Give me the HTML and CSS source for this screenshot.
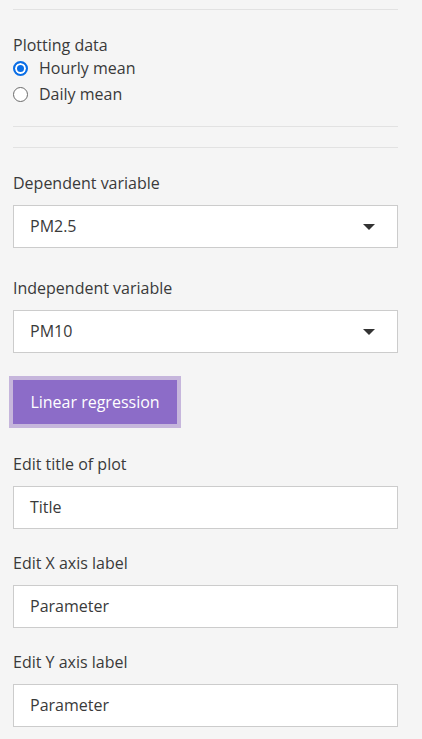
FILE: index.html
```html
<!DOCTYPE html>
<html>
<head>
<meta charset="utf-8">
<link rel="stylesheet" href="styles.css">
</head>
<body>
<div class="panel">
  <hr class="rule rule-top">
  <div class="radio-group">
    <div class="group-label">Plotting data</div>
    <label class="radio"><span class="dot checked"></span><span>Hourly mean</span></label>
    <label class="radio"><span class="dot"></span><span>Daily mean</span></label>
  </div>
  <hr class="rule rule-a">
  <hr class="rule rule-b">
  <div class="field field-select">
    <div class="label">Dependent variable</div>
    <div class="select"><span>PM2.5</span><span class="caret"></span></div>
  </div>
  <div class="field field-select2">
    <div class="label">Independent variable</div>
    <div class="select"><span>PM10</span><span class="caret"></span></div>
  </div>
  <div class="btn-wrap"><button class="btn">Linear regression</button></div>
  <div class="field field-text">
    <div class="label">Edit title of plot</div>
    <div class="input">Title</div>
  </div>
  <div class="field field-text">
    <div class="label">Edit X axis label</div>
    <div class="input">Parameter</div>
  </div>
  <div class="field field-text">
    <div class="label">Edit Y axis label</div>
    <div class="input">Parameter</div>
  </div>
</div>
</body>
</html>
```

FILE: styles.css
```css
html, body {
  margin: 0;
  padding: 0;
  background: #f5f5f5;
}
body {
  font-family: "Open Sans", "Noto Sans", sans-serif;
  font-size: 16px;
  color: #3a3a3a;
}
.panel {
  width: 385px;
  padding: 9px 0 0 13px;
}
.rule {
  border: 0;
  border-top: 1px solid #e2e2e2;
  margin: 0;
  height: 0;
}
.radio-group {
  padding-top: 24px;
}
.group-label {
  line-height: 22px;
  height: 22px;
}
.radio {
  display: flex;
  align-items: center;
  gap: 11px;
  height: 26px;
  line-height: 26px;
}
.radio:first-of-type { margin-top: -1px; }
.dot {
  width: 13px;
  height: 13px;
  border: 1px solid #6b6b6b;
  border-radius: 50%;
  background: #fff;
  box-sizing: content-box;
  flex: none;
}
.dot.checked {
  border: 2px solid #0a6ee6;
  width: 11px;
  height: 11px;
  background: #0a6ee6;
  box-shadow: inset 0 0 0 2px #fff;
}
.rule-a { margin-top: 19px; }
.rule-b { margin-top: 20px; }
.field-select { margin-top: 24px; }
.field-select2 { margin-top: 29px; }
.label {
  line-height: 22px;
  height: 22px;
  margin-bottom: 11px;
}
.select, .input {
  box-sizing: border-box;
  height: 43px;
  width: 385px;
  background: #fff;
  border: 1px solid #cccccc;
  padding: 0 16px;
  display: flex;
  align-items: center;
  justify-content: space-between;
  line-height: 41px;
}
.caret {
  width: 0;
  height: 0;
  border-left: 6px solid transparent;
  border-right: 6px solid transparent;
  border-top: 6px solid #333;
  margin-right: 6px;
}
.btn-wrap {
  margin-top: 23px;
  margin-left: -4px;
  display: flex;
}
.btn {
  font: inherit;
  color: #fff;
  background: #8c6cc8;
  border: 0;
  height: 44px;
  width: 164px;
  padding: 0;
  box-sizing: content-box;
  outline: 4px solid #c6b6dc;
  margin: 4px;
}
.field-text { margin-top: 25px; }
.field-text + .field-text { margin-top: 23px; }
```
